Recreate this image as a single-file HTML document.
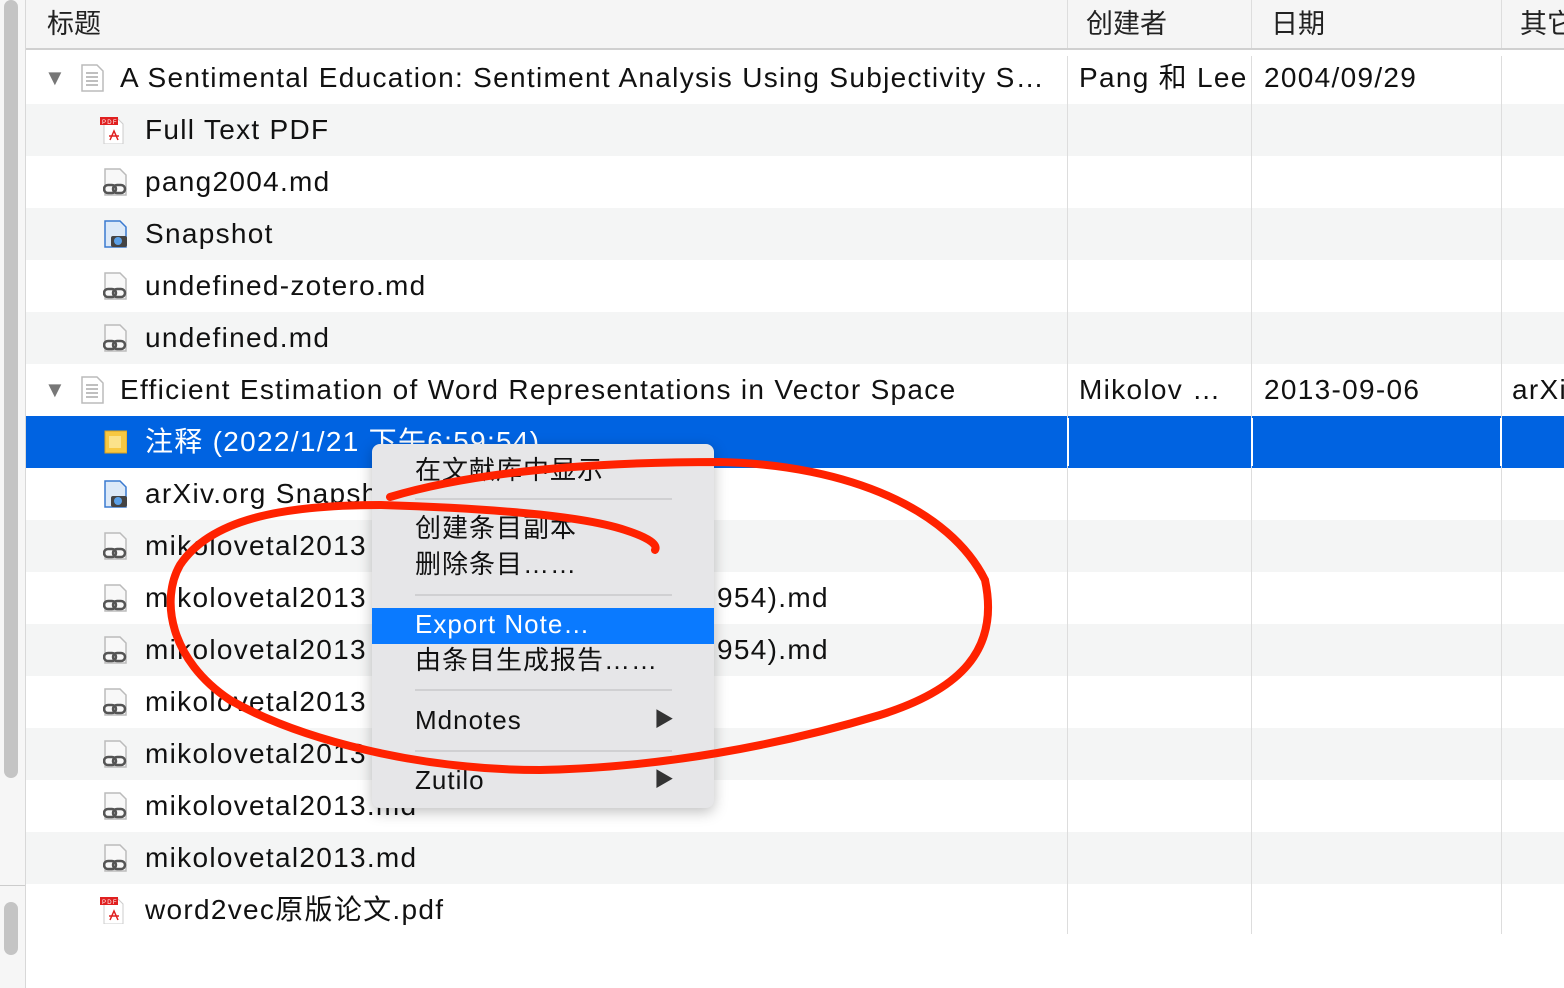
<html><head><style>
body{margin:0;width:1564px;height:988px;overflow:hidden;background:#fff;font-family:"Liberation Sans","Noto Sans CJK SC",sans-serif;position:relative}
.sb{position:absolute;left:0;top:0;width:25px;height:988px;background:#f6f6f6;border-right:1px solid #d8d8d8}
.th{position:absolute;left:4px;width:14px;background:#c4c4c4;border-radius:7px}
.hdr{position:absolute;left:26px;top:0;width:1538px;height:48px;background:#f5f5f5;border-bottom:2px solid #d0d0d0;font-size:27px;color:#222;overflow:hidden}
.hdr span{position:absolute;top:6px;white-space:nowrap;line-height:36px}
.row{position:absolute;left:26px;width:1538px;height:52px;font-size:28px;color:#111;letter-spacing:1.3px;overflow:hidden}
.g{background:#f4f5f5}
.sel{background:#0063e1;color:#fff}
.row .t{position:absolute;top:8px;white-space:nowrap;line-height:36px;height:36px}
.vs{position:absolute;top:56px;width:1px;height:878px;background:#ddd}
.ic{position:absolute;top:12px;width:24px;height:28px}
.menu{position:absolute;left:372px;top:444px;width:342px;height:364px;background:#e6e6e8;border-radius:8px;box-shadow:0 4px 14px rgba(0,0,0,.25);font-size:26px;color:#111;letter-spacing:1px}
.menu div{position:absolute;left:43px;white-space:nowrap;line-height:36px}
.sep{position:absolute;left:43px!important;width:257px;height:2px;background:#d0d0d2}
.arr{position:absolute;left:282px!important;font-size:20px;color:#333}
</style></head><body>
<div class="sb"><div class="th" style="top:0;height:778px"></div><div class="th" style="top:902px;height:53px"></div><div style="position:absolute;left:0;top:885px;width:25px;height:1px;background:#ccc"></div></div>
<div class="hdr"><span style="left:21px">标题</span><span style="left:1060px">创建者</span><span style="left:1245px">日期</span><span style="left:1494px">其它</span>
<div style="position:absolute;left:1041px;top:0;width:1px;height:48px;background:#ddd"></div><div style="position:absolute;left:1225px;top:0;width:1px;height:48px;background:#ddd"></div><div style="position:absolute;left:1475px;top:0;width:1px;height:48px;background:#ddd"></div></div>

<svg width="0" height="0" style="position:absolute"><defs>
<g id="doc"><path d="M2 1h15l6 6v20H2z" fill="#fff" stroke="#bbb" stroke-width="1.5"/><path d="M6 9h12M6 13h12M6 17h12M6 21h12" stroke="#999" stroke-width="1.2"/></g>
<g id="lnk"><path d="M2 1h15l6 6v20H2z" fill="#f8f8f8" stroke="#bbb" stroke-width="1.5"/><rect x="1" y="17" width="12" height="8" rx="4" fill="none" stroke="#555" stroke-width="2.5"/><rect x="10" y="17" width="12" height="8" rx="4" fill="none" stroke="#555" stroke-width="2.5"/></g>
<g id="pdf"><path d="M4 3h14l5 5v20H4z" fill="#fff" stroke="#ccc"/><rect x="0" y="1" width="18" height="8" fill="#e02020"/><text x="2" y="8" font-size="6" fill="#fff" font-family="Liberation Sans">PDF</text><path d="M10 24l4-9 4 9M9 20h10" stroke="#e02020" fill="none" stroke-width="1.5"/></g>
<g id="snap"><path d="M2 1h15l6 6v20H2z" fill="#dce9f8" stroke="#3a7ad0" stroke-width="1.5"/><rect x="8" y="16" width="16" height="11" rx="2" fill="#444"/><circle cx="15" cy="21" r="4" fill="#5aa0e8"/></g>
<g id="note"><rect x="2" y="3" width="22" height="22" fill="#f7c842" stroke="#d9a020"/><rect x="6" y="8" width="12" height="12" fill="#fbe28a"/></g>
</defs></svg>

<div class="row" style="top:52px"><span class="t" style="left:18px;color:#777;font-size:22px;top:8px">▼</span><svg class="ic" style="left:54px"><use href="#doc"/></svg><span class="t" style="left:94px">A Sentimental Education: Sentiment Analysis Using Subjectivity S…</span><span class="t" style="left:1053px">Pang 和 Lee</span><span class="t" style="left:1238px">2004/09/29</span></div>
<div class="row g" style="top:104px"><svg class="ic" style="left:74px"><use href="#pdf"/></svg><span class="t" style="left:119px">Full Text PDF</span></div>
<div class="row" style="top:156px"><svg class="ic" style="left:77px"><use href="#lnk"/></svg><span class="t" style="left:119px">pang2004.md</span></div>
<div class="row g" style="top:208px"><svg class="ic" style="left:77px"><use href="#snap"/></svg><span class="t" style="left:119px">Snapshot</span></div>
<div class="row" style="top:260px"><svg class="ic" style="left:77px"><use href="#lnk"/></svg><span class="t" style="left:119px">undefined-zotero.md</span></div>
<div class="row g" style="top:312px"><svg class="ic" style="left:77px"><use href="#lnk"/></svg><span class="t" style="left:119px">undefined.md</span></div>
<div class="row" style="top:364px"><span class="t" style="left:18px;color:#777;font-size:22px;top:8px">▼</span><svg class="ic" style="left:54px"><use href="#doc"/></svg><span class="t" style="left:94px">Efficient Estimation of Word Representations in Vector Space</span><span class="t" style="left:1053px">Mikolov …</span><span class="t" style="left:1238px">2013-09-06</span><span class="t" style="left:1486px">arXiv</span></div>
<div class="row sel" style="top:416px"><svg class="ic" style="left:77px"><use href="#note"/></svg><span class="t" style="left:119px">注释 (2022/1/21 下午6:59:54)</span></div>
<div class="row" style="top:468px"><svg class="ic" style="left:77px"><use href="#snap"/></svg><span class="t" style="left:119px">arXiv.org Snapshot</span></div>
<div class="row g" style="top:520px"><svg class="ic" style="left:77px"><use href="#lnk"/></svg><span class="t" style="left:119px">mikolovetal2013</span></div>
<div class="row" style="top:572px"><svg class="ic" style="left:77px"><use href="#lnk"/></svg><span class="t" style="left:119px">mikolovetal2013</span><span class="t" style="left:691px">954).md</span></div>
<div class="row g" style="top:624px"><svg class="ic" style="left:77px"><use href="#lnk"/></svg><span class="t" style="left:119px">mikolovetal2013</span><span class="t" style="left:691px">954).md</span></div>
<div class="row" style="top:676px"><svg class="ic" style="left:77px"><use href="#lnk"/></svg><span class="t" style="left:119px">mikolovetal2013</span></div>
<div class="row g" style="top:728px"><svg class="ic" style="left:77px"><use href="#lnk"/></svg><span class="t" style="left:119px">mikolovetal2013</span></div>
<div class="row" style="top:780px"><svg class="ic" style="left:77px"><use href="#lnk"/></svg><span class="t" style="left:119px">mikolovetal2013.md</span></div>
<div class="row g" style="top:832px"><svg class="ic" style="left:77px"><use href="#lnk"/></svg><span class="t" style="left:119px">mikolovetal2013.md</span></div>
<div class="row" style="top:884px"><svg class="ic" style="left:74px"><use href="#pdf"/></svg><span class="t" style="left:119px">word2vec原版论文.pdf</span></div>
<div class="vs" style="left:1067px"></div><div class="vs" style="left:1251px"></div><div class="vs" style="left:1501px"></div>
<div style="position:absolute;left:1067px;top:418px;width:2px;height:48px;background:#fff"></div><div style="position:absolute;left:1251px;top:418px;width:2px;height:48px;background:#fff"></div><div style="position:absolute;left:1500px;top:418px;width:2px;height:48px;background:#fff"></div>

<div class="menu">
<div style="top:8px">在文献库中显示</div>
<div class="sep" style="top:54px"></div>
<div style="top:66px">创建条目副本</div>
<div style="top:102px">删除条目……</div>
<div class="sep" style="top:150px"></div>
<div style="left:0!important;top:164px;width:342px;height:36px;background:#0a7aff"></div>
<div style="top:162px;color:#fff">Export Note…</div>
<div style="top:198px">由条目生成报告……</div>
<div class="sep" style="top:245px"></div>
<div style="top:258px">Mdnotes</div><div class="arr" style="top:258px">▶</div>
<div class="sep" style="top:306px"></div>
<div style="top:318px">Zutilo</div><div class="arr" style="top:318px">▶</div>
</div>

<svg style="position:absolute;left:0;top:0" width="1564" height="988"><path d="M390 497 C480 470 600 462 720 462 C850 465 950 510 985 580 C1000 650 960 690 880 715 C780 745 660 768 540 770 C420 770 300 740 230 700 C170 660 160 600 180 565 C210 520 280 505 380 505 C480 508 580 515 625 530 C650 538 658 545 655 550" fill="none" stroke="#ff2200" stroke-width="8" stroke-linecap="round"/></svg>
</body></html>
